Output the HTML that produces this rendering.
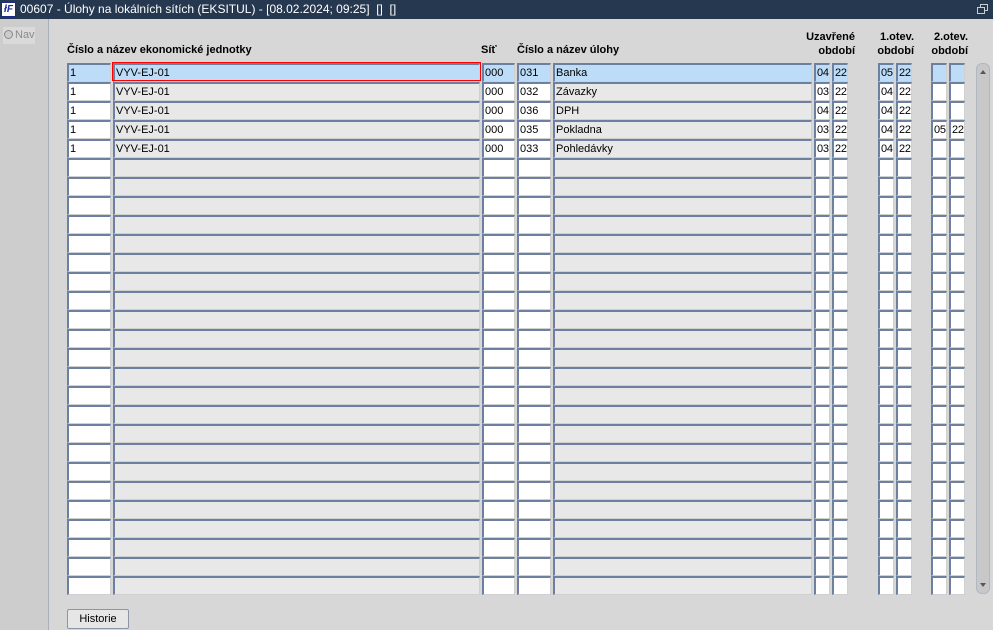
<!DOCTYPE html>
<html><head><meta charset="utf-8"><style>
body{margin:0;width:993px;height:630px;background:#d7d7d7;font-family:"Liberation Sans",sans-serif;font-size:11px;position:relative;overflow:hidden}
#tb{position:absolute;left:0;top:0;width:993px;height:19px;background:#263750;color:#fff;font-size:12px;line-height:19px}
#tb .t{position:absolute;left:20px;top:0}
#logo{position:absolute;left:1px;top:2px;width:15px;height:15px;background:#fff;border:1px solid #1a2a8a;box-sizing:border-box;color:#1a2aa0;font:bold italic 10px/13px "Liberation Sans",sans-serif;text-align:center}
#left{position:absolute;left:0;top:19px;width:48px;height:611px;background:#cdcdcd;border-right:1px solid #a8b0bc}
#nav{position:absolute;left:3px;top:8px;width:32px;height:17px;background:#dadada;color:#8a8a8a;font-size:11px;line-height:17px;white-space:nowrap}
#nav i{display:inline-block;width:7px;height:7px;border-radius:50%;border:1px solid #888;background:#ccc;margin:0 2px 0 1px;vertical-align:-1px}
.h{position:absolute;font-weight:bold;font-size:11px;color:#000}
.f{position:absolute;height:19px;box-sizing:border-box;border-top:2px solid #6e80a0;border-left:2px solid #6e80a0;border-right:1px solid #d0d0d0;border-bottom:1px solid #d0d0d0;background:#fff;font-size:11px;line-height:16px;padding-left:1px;color:#000;white-space:nowrap;overflow:hidden}
.g{background:#e8e8e8}
.s{background:#bcdcf8}
#red{position:absolute;left:112px;top:62px;width:369px;height:19px;box-sizing:border-box;border:1px solid #ff0000;z-index:5}
#sb{position:absolute;left:976px;top:63px;width:14px;height:531px;background:#c8c8c8;border:1px solid #b0b8c4;box-sizing:border-box;border-radius:6px}
#btn{position:absolute;left:67px;top:609px;width:62px;height:20px;box-sizing:border-box;border:1px solid #8a96a8;background:#e6e6e6;border-radius:2px;text-align:center;line-height:18px;font-size:11px}
</style></head><body>
<div id="tb"><div id="logo">łF</div><span class="t">00607 - Úlohy na lokálních sítích (EKSITUL) - [08.02.2024; 09:25] &nbsp;[] &nbsp;[]</span>
<svg style="position:absolute;left:977px;top:4px" width="12" height="11"><rect x="3.5" y="0.5" width="7" height="6" fill="none" stroke="#ccc"/><rect x="0.5" y="3.5" width="7" height="6" fill="#263750" stroke="#ccc"/></svg></div>
<div id="left"><div id="nav"><i></i>Nav</div></div>
<div class="h" style="left:67px;top:44px">Číslo a název ekonomické jednotky</div>
<div class="h" style="left:481px;top:44px">Síť</div>
<div class="h" style="left:517px;top:44px">Číslo a název úlohy</div>
<div class="h" style="left:790px;top:30px;width:65px;text-align:right;line-height:14px">Uzavřené<br>období</div>
<div class="h" style="left:860px;top:30px;width:54px;text-align:right;line-height:14px">1.otev.<br>období</div>
<div class="h" style="left:915px;top:30px;width:53px;text-align:right;line-height:14px">2.otev.<br>období</div>
<div id="rows"></div>
<div id="red"></div>
<div id="sb">
<svg style="position:absolute;left:0;top:0" width="12" height="16"><path d="M3 10 L6 6 L9 10Z" fill="#556"/></svg>
<svg style="position:absolute;left:0;top:513px" width="12" height="16"><path d="M3 6 L6 10 L9 6Z" fill="#556"/></svg>
</div>
<div id="btn">Historie</div>
<script>
var cols=[[67,44,0],[113,367,1],[482,33,0],[517,34,0],[553,259,1],[814,16,0],[832,16,0],[878,16,0],[896,16,0],[931,16,0],[949,16,0]];
var data=[["1","VYV-EJ-01","000","031","Banka","04","22","05","22","",""],
["1","VYV-EJ-01","000","032","Závazky","03","22","04","22","",""],
["1","VYV-EJ-01","000","036","DPH","04","22","04","22","",""],
["1","VYV-EJ-01","000","035","Pokladna","03","22","04","22","05","22"],
["1","VYV-EJ-01","000","033","Pohledávky","03","22","04","22","",""]];
var h="";
for(var r=0;r<28;r++){var y=63+r*19;for(var c=0;c<cols.length;c++){var k="f";if(cols[c][2])k+=" g";if(r==0)k+=" s";var t=data[r]?data[r][c]:"";var ls=(c>=5)?"letter-spacing:-0.3px;":"";h+='<div class="'+k+'" style="'+ls+'left:'+cols[c][0]+'px;top:'+y+'px;width:'+cols[c][1]+'px;">'+t+'</div>';}}
for(var i=0;i<16;i++){h+='<div style="position:absolute;left:981px;top:'+(248+i*8)+'px;width:2px;height:2px;background:#8a94a6"></div><div style="position:absolute;left:985px;top:'+(245+i*8)+'px;width:2px;height:2px;background:#8a94a6"></div>';}
document.getElementById("rows").innerHTML=h;
</script>
</body></html>
